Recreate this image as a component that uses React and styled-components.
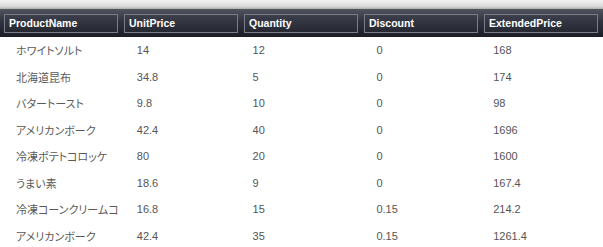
import React from "react";
import styled, { createGlobalStyle } from "styled-components";

const Global = createGlobalStyle`
  html, body { margin: 0; padding: 0; background: #fff; }
  body { font-family: "Liberation Sans", "Noto Sans CJK JP", sans-serif; }
`;

const Grid = styled.div`
  width: 603px;
  height: 247px;
  overflow: hidden;
  background: #fff;
`;

const TopBand = styled.div`
  height: 9px;
  background: linear-gradient(#f4f4f4, #dadada 70%, #b0b0b0);
`;

const HeaderRow = styled.div`
  height: 28px;
  display: flex;
  align-items: center;
  gap: 6px;
  padding: 0 5px 0 4px;
  background: linear-gradient(#50545f 0%, #30333e 45%, #1c1e27 100%);
`;

const HeaderCell = styled.div`
  width: 114px;
  height: 19px;
  box-sizing: border-box;
  border: 1px solid #7c7f8a;
  background: linear-gradient(#3c404c, #252731);
  color: #fff;
  font-family: "Liberation Sans", sans-serif;
  font-weight: bold;
  font-size: 10.5px;
  line-height: 17px;
  padding-left: ${(p) => p.$pad}px;
  white-space: nowrap;
`;

const Body = styled.div`
  display: flex;
  flex-direction: column;
`;

const Row = styled.div`
  display: flex;
  height: 26.5px;
  align-items: center;
  padding-left: 4px;
`;

const Cell = styled.div`
  width: 120px;
  box-sizing: border-box;
  padding-left: ${(p) => p.$pad}px;
  color: #555;
  font-size: 11px;
  white-space: nowrap;
  overflow: hidden;
`;

const NameCell = styled(Cell)`
  font-family: "Noto Sans CJK JP", sans-serif;
  font-size: 11px;
  font-feature-settings: "palt";
  color: #5a5a5a;
`;

const columns = [
  { name: "ProductName", hpad: 4, pad: 12 },
  { name: "UnitPrice", hpad: 4, pad: 13 },
  { name: "Quantity", hpad: 4, pad: 9 },
  { name: "Discount", hpad: 4, pad: 13 },
  { name: "ExtendedPrice", hpad: 4, pad: 10 },
];

const rows = [
  ["ホワイトソルト", "14", "12", "0", "168"],
  ["北海道昆布", "34.8", "5", "0", "174"],
  ["バタートースト", "9.8", "10", "0", "98"],
  ["アメリカンボーク", "42.4", "40", "0", "1696"],
  ["冷凍ポテトコロッケ", "80", "20", "0", "1600"],
  ["うまい素", "18.6", "9", "0", "167.4"],
  ["冷凍コーンクリームコ", "16.8", "15", "0.15", "214.2"],
  ["アメリカンボーク", "42.4", "35", "0.15", "1261.4"],
];

export default function App() {
  return (
    <Grid>
      <Global />
      <TopBand />
      <HeaderRow>
        {columns.map((c) => (
          <HeaderCell key={c.name} $pad={c.hpad}>
            {c.name}
          </HeaderCell>
        ))}
      </HeaderRow>
      <Body>
        {rows.map((r, i) => (
          <Row key={i}>
            {r.map((v, j) =>
              j === 0 ? (
                <NameCell key={j} $pad={columns[j].pad}>{v}</NameCell>
              ) : (
                <Cell key={j} $pad={columns[j].pad}>{v}</Cell>
              )
            )}
          </Row>
        ))}
      </Body>
    </Grid>
  );
}
